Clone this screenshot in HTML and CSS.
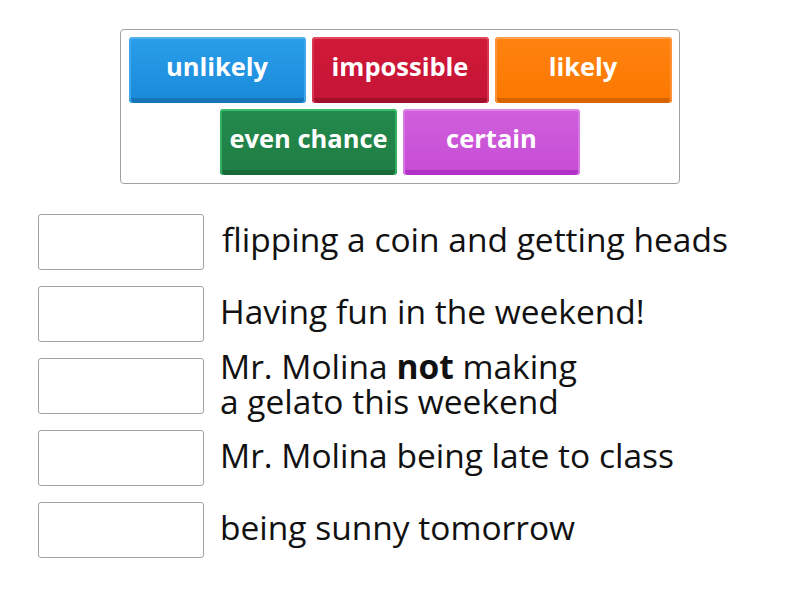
FILE: index.html
```html
<!DOCTYPE html>
<html>
<head>
<meta charset="utf-8">
<link rel="stylesheet" href="styles.css">
</head>
<body>
<div class="bank">
  <div class="tile blue">unlikely</div>
  <div class="tile red">impossible</div>
  <div class="tile orange">likely</div>
  <div class="tile green">even chance</div>
  <div class="tile purple">certain</div>
</div>
<div class="rows">
  <div class="row"><div class="slot"></div><div class="label first">flipping a coin and getting heads</div></div>
  <div class="row"><div class="slot"></div><div class="label">Having fun in the weekend!</div></div>
  <div class="row"><div class="slot"></div><div class="label">Mr. Molina <b>not</b> making<br>a gelato this weekend</div></div>
  <div class="row"><div class="slot"></div><div class="label">Mr. Molina being late to class</div></div>
  <div class="row"><div class="slot"></div><div class="label">being sunny tomorrow</div></div>
</div>
</body>
</html>
```
FILE: styles.css
```css
html, body {
  margin: 0;
  padding: 0;
  background: #fff;
  font-family: "Open Sans", "Liberation Sans", sans-serif;
}
.bank {
  box-sizing: border-box;
  width: 560px;
  height: 155px;
  margin: 29px 0 0 120px;
  border: 1px solid #a0a0a0;
  border-radius: 4px;
  padding: 7px 0 0 0;
  display: flex;
  flex-wrap: wrap;
  justify-content: center;
  align-content: flex-start;
  gap: 6px 6px;
}
.tile {
  box-sizing: border-box;
  width: 177px;
  height: 66px;
  border-radius: 4px;
  color: #fff;
  font-weight: 700;
  font-size: 25.5px;
  display: flex;
  align-items: center;
  justify-content: center;
  padding-bottom: 8px;
  white-space: nowrap;
}
.blue {
  background: linear-gradient(#2a9eea, #1a8ad8);
  box-shadow: inset 0 2px 0 #52b2ee, inset 2px 0 0 #3ea6ea, inset -2px 0 0 #3ea6ea, inset 0 -5px 0 #1674b8;
}
.red {
  background: linear-gradient(#d21a3a, #c41434);
  box-shadow: inset 0 2px 0 #e0485e, inset 2px 0 0 #d83650, inset -2px 0 0 #d83650, inset 0 -5px 0 #a01028;
}
.orange {
  background: linear-gradient(#ff8210, #fb7800);
  box-shadow: inset 0 2px 0 #ffa050, inset 2px 0 0 #ff9236, inset -2px 0 0 #ff9236, inset 0 -5px 0 #d86400;
}
.green {
  background: linear-gradient(#23894c, #1f7e45);
  box-shadow: inset 0 2px 0 #36c06a, inset 2px 0 0 #30b060, inset -2px 0 0 #30b060, inset 0 -5px 0 #186a38;
}
.purple {
  background: linear-gradient(#d060dc, #c64cd4);
  box-shadow: inset 0 2px 0 #dc88e6, inset 2px 0 0 #d878e2, inset -2px 0 0 #d878e2, inset 0 -5px 0 #b030c8;
}
.rows {
  margin: 30px 0 0 38px;
  display: flex;
  flex-direction: column;
  gap: 16px;
}
.row {
  display: flex;
  align-items: center;
  gap: 16px;
  height: 56px;
}
.slot {
  box-sizing: border-box;
  width: 166px;
  height: 56px;
  border: 1px solid #a0a0a0;
  border-radius: 3px;
  flex: none;
}
.label {
  font-size: 33.5px;
  line-height: 35px;
  color: #111;
  white-space: nowrap;
  margin-top: -5px;
}
.label b {
  font-weight: 700;
}
.label.first {
  padding-left: 2px;
}
```
